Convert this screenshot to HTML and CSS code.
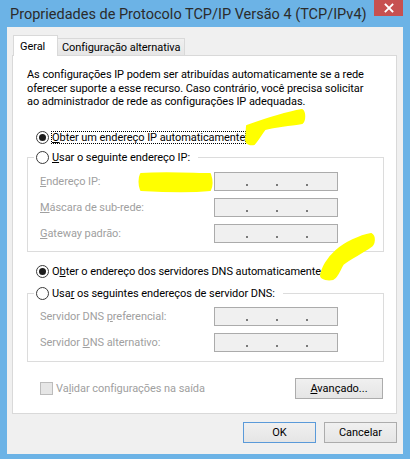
FILE: index.html
```html
<!DOCTYPE html>
<html lang="pt">
<head>
<meta charset="utf-8">
<title>Propriedades de Protocolo TCP/IP Versão 4 (TCP/IPv4)</title>
<link rel="stylesheet" href="styles.css">
</head>
<body>
<div class="window">
  <div class="titlebar">
    <span class="title">Propriedades de Protocolo TCP/IP Versão 4 (TCP/IPv4)</span>
    <div class="close">
      <svg width="10" height="10" viewBox="0 0 10 10"><path d="M1.5 1.5 L8.5 8.5 M8.5 1.5 L1.5 8.5" stroke="#fff" stroke-width="1.8" stroke-linecap="square"/></svg>
    </div>
  </div>
  <div class="client">
    <div class="tabs">
      <div class="tab active">Geral</div>
      <div class="tab">Configuração alternativa</div>
    </div>
    <div class="panel">
      <p class="desc">As configurações IP podem ser atribuídas automaticamente se a rede<br>oferecer suporte a esse recurso. Caso contrário, você precisa solicitar<br>ao administrador de rede as configurações IP adequadas.</p>

      <div class="radio-row first">
        <span class="radio checked"></span>
        <span class="focus"><u>O</u>bter um endereço IP automaticamente</span>
      </div>

      <fieldset class="group g1">
        <legend><span class="lg"><span class="radio"></span><span><u>U</u>sar o seguinte endereço IP:</span></span></legend>
        <div class="fields">
          <span class="lbl"><u>E</u>ndereço IP:</span>
          <div class="ip"><i></i><i></i><i></i></div>
          <span class="lbl"><u>M</u>áscara de sub-rede:</span>
          <div class="ip"><i></i><i></i><i></i></div>
          <span class="lbl"><u>G</u>ateway padrão:</span>
          <div class="ip"><i></i><i></i><i></i></div>
        </div>
      </fieldset>

      <div class="radio-row dns">
        <span class="radio checked"></span>
        <span>O<u>b</u>ter o endereço dos servidores DNS automaticamente</span>
      </div>

      <fieldset class="group g2">
        <legend><span class="lg"><span class="radio"></span><span>Usa<u>r</u> os seguintes endereços de servidor DNS:</span></span></legend>
        <div class="fields">
          <span class="lbl">Servidor DNS <u>p</u>referencial:</span>
          <div class="ip"><i></i><i></i><i></i></div>
          <span class="lbl">Servidor <u>D</u>NS alternativo:</span>
          <div class="ip"><i></i><i></i><i></i></div>
        </div>
      </fieldset>

      <div class="bottom-row">
        <span class="check"></span>
        <span class="lbl">Va<u>l</u>idar configurações na saída</span>
        <button class="btn adv"><u>A</u>vançado...</button>
      </div>
    </div>
    <div class="buttons">
      <button class="btn default">OK</button>
      <button class="btn">Cancelar</button>
    </div>
  </div>
  <svg class="marks" width="410" height="459" viewBox="0 0 410 459">
    <g fill="#ffff00" stroke="#ffff00" stroke-width="2" stroke-linejoin="round">
      <path d="M247,126 C258,122 285,113 302,110 C305,112 305,120 302,123 C290,125 272,127 265,129 C261,134 258,140 254,144 C250,145 246,143 246,140 Z"/>
      <path d="M141,174 C165,172 195,174 210,174 C212,180 212,186 210,190 C190,192 160,191 141,190 C139,185 139,178 141,174 Z"/>
      <path d="M371,234 C375,236 375,244 370,247 C360,254 350,258 343,264 C339,270 338,276 333,279 C328,280 322,279 321,276 C322,268 328,258 336,251 C345,243 360,236 371,234 Z"/>
    </g>
  </svg>
</div>
</body>
</html>
```
FILE: styles.css
```css
* { box-sizing: border-box; }
html, body { margin: 0; padding: 0; }
body {
  width: 410px;
  height: 459px;
  overflow: hidden;
  background: #6cb3e6;
  font-family: Roboto, "Liberation Sans", sans-serif;
  font-size: 11px;
  letter-spacing: -0.06px;
  color: #000;
}
.window {
  position: relative;
  width: 410px;
  height: 459px;
  display: flex;
  flex-direction: column;
}
.titlebar {
  height: 27px;
  flex: none;
  display: flex;
  align-items: flex-start;
}
.title {
  margin-top: 7px;
  padding-left: 10px;
  font-size: 14.5px;
  line-height: 15px;
  letter-spacing: 0;
  color: #2b2b2b;
  white-space: nowrap;
}
.close {
  margin-left: auto;
  margin-right: 7px;
  width: 29px;
  height: 16px;
  background: #c75050;
  display: flex;
  align-items: center;
  justify-content: center;
}
.close svg { display: block; }

.client {
  flex: none;
  height: 427px;
  margin: 0 7px;
  background: #f0f0f0;
  padding: 8px 6px 0 5px;
  display: flex;
  flex-direction: column;
}
.tabs {
  height: 20px;
  display: flex;
  align-items: flex-end;
  position: relative;
  z-index: 1;
  flex: none;
}
.tab {
  white-space: nowrap;
  line-height: 15px;
}
.tab.active {
  margin-left: 1px;
  width: 45px;
  height: 21px;
  margin-bottom: -1px;
  background: #fff;
  border: 1px solid #d9d9d9;
  border-bottom: none;
  padding: 3px 0 0 6px;
}
.tab:not(.active) {
  width: 127px;
  height: 17px;
  border: 1px solid #d9d9d9;
  border-left: none;
  border-bottom: none;
  background: linear-gradient(#f0f0f0, #e6e6e6);
  padding: 1px 0 0 4px;
}
.panel {
  flex: none;
  height: 359px;
  background: #fff;
  border: 1px solid #d9d9d9;
  padding: 0 12px 0 14px;
  display: flex;
  flex-direction: column;
}
.desc {
  margin: 12px 0 0;
  line-height: 13.5px;
  white-space: nowrap;
}
.radio-row {
  height: 15px;
  display: flex;
  align-items: center;
  padding-left: 9px;
  line-height: 15px;
  white-space: nowrap;
}
.radio-row.first { margin-top: 21.5px; }
.radio-row.dns { margin-top: 12px; }
.radio {
  flex: none;
  width: 13px;
  height: 13px;
  border: 1px solid #3a3a3a;
  border-radius: 50%;
  background: #fff;
  margin-right: 3px;
  display: flex;
  align-items: center;
  justify-content: center;
}
.radio.checked::after {
  content: "";
  width: 7px;
  height: 7px;
  border-radius: 50%;
  background: #1c1c1c;
}
.radio-row.first .radio { margin-right: 2px; }
.focus {
  display: inline-block;
  line-height: 11px;
  border: 1px dotted #000;
}
.group {
  margin: 5px 0 0;
  padding: 7px 0 8px 6px;
  border: 1px solid #dcdcdc;
  min-width: 0;
}
.group.g2 {
  margin-top: 7px;
  padding: 6px 0 9px 6px;
}
.group legend {
  padding: 0 8px 0 2px;
}
.lg {
  display: flex;
  align-items: center;
  height: 15px;
  line-height: 15px;
  white-space: nowrap;
}
.fields {
  margin-left: 6px;
  display: grid;
  grid-template-columns: 174px 124px;
  grid-auto-rows: 19px;
  row-gap: 7px;
  align-items: center;
}
.lbl {
  color: #a0a0a0;
  white-space: nowrap;
  line-height: 15px;
}
.ip {
  height: 19px;
  border: 1px solid #ababab;
  background: #f0f0f0;
  display: flex;
  align-items: flex-end;
  justify-content: center;
  gap: 28px;
  padding: 0 0 4px 2px;
}
.ip i {
  display: block;
  width: 2px;
  height: 2px;
  background: #7a7a7a;
}
.bottom-row {
  margin-top: 16px;
  height: 21px;
  display: flex;
  align-items: center;
  padding-left: 13px;
}
.check {
  width: 13px;
  height: 13px;
  border: 1px solid #bcbcbc;
  background: #e6e6e6;
  margin-right: 3px;
}
.btn {
  height: 21px;
  border: 1px solid #acacac;
  background: linear-gradient(#f0f0f0, #e5e5e5);
  font: inherit;
  color: #000;
  padding: 0;
  line-height: 15px;
  cursor: default;
}
.btn.adv {
  width: 88px;
  margin-left: auto;
  margin-right: 1px;
}
.buttons {
  margin-top: 8px;
  display: flex;
  justify-content: flex-end;
  gap: 8px;
}
.buttons .btn { width: 73px; }
.btn.default { border-color: #5a9ad9; }
.marks {
  position: absolute;
  left: 0;
  top: 0;
  pointer-events: none;
}
```
